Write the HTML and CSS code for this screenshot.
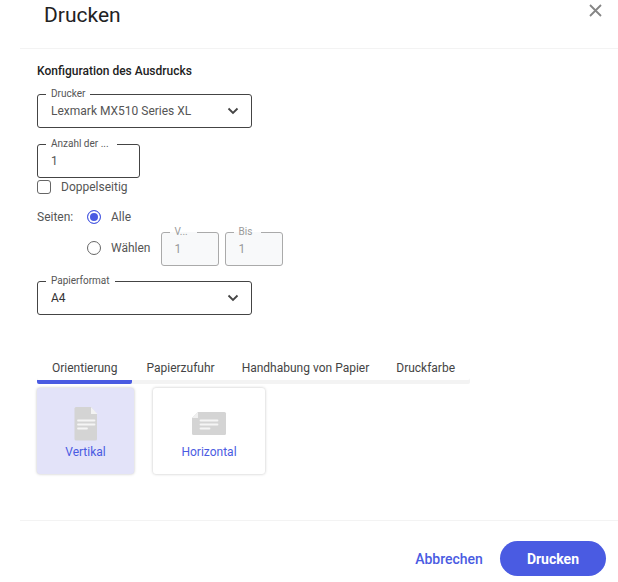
FILE: index.html
```html
<!DOCTYPE html>
<html lang="de">
<head>
  <meta charset="UTF-8" />
  <meta name="viewport" content="width=device-width, initial-scale=1.0" />
  <title>Drucken</title>
  <link rel="stylesheet" href="styles.css">
</head>
<body>
  <div class="dialog" role="dialog" aria-labelledby="dialogTitle">
    <header class="dialog-header">
      <h1 id="dialogTitle">Drucken</h1>
      <button type="button" class="close" aria-label="Schließen">
        <svg width="13" height="13" viewBox="0 0 13 13" fill="none" stroke="#858585" stroke-width="1.8"><path d="M1 1l11 11M12 1L1 12" /></svg>
      </button>
    </header>

    <form class="dialog-body" id="printForm">
      <h2>Konfiguration des Ausdrucks</h2>

      <fieldset class="field field-wide">
        <legend><label for="printer">Drucker</label></legend>
        <div class="select">
          <select id="printer" name="printer">
            <option>Lexmark MX510 Series XL</option>
          </select>
          <svg class="chevron" width="12" height="8" viewBox="0 0 12 8"><path d="M1.500 1.500L6 6l4.500-4.500" /></svg>
        </div>
      </fieldset>

      <fieldset class="field field-copies">
        <legend><label for="copies">Anzahl der ...</label></legend>
        <input type="text" id="copies" name="copies" value="1" />
      </fieldset>

      <label class="option">
        <input type="checkbox" name="duplex" />
        Doppelseitig
      </label>

      <div class="pages">
        <span class="pages-title">Seiten:</span>
        <label class="option">
          <input type="radio" name="pages" value="all" checked />
          Alle
        </label>
        <div class="range">
          <label class="option">
            <input type="radio" name="pages" value="range" />
            Wählen
          </label>
          <fieldset class="field field-page" disabled>
            <legend><label for="pageFrom">V...</label></legend>
            <input type="text" id="pageFrom" name="from" value="1" />
          </fieldset>
          <fieldset class="field field-page" disabled>
            <legend><label for="pageTo">Bis</label></legend>
            <input type="text" id="pageTo" name="to" value="1" />
          </fieldset>
        </div>
      </div>

      <fieldset class="field field-wide">
        <legend><label for="format">Papierformat</label></legend>
        <div class="select">
          <select id="format" name="format" class="dark">
            <option>A4</option>
          </select>
          <svg class="chevron" width="12" height="8" viewBox="0 0 12 8"><path d="M1.500 1.500L6 6l4.500-4.500" /></svg>
        </div>
      </fieldset>

      <div class="tabs" role="tablist">
        <button type="button" class="tab active" role="tab" aria-selected="true">Orientierung</button>
        <button type="button" class="tab" role="tab">Papierzufuhr</button>
        <button type="button" class="tab" role="tab">Handhabung von Papier</button>
        <button type="button" class="tab" role="tab">Druckfarbe</button>
      </div>

      <div class="cards">
        <button type="button" class="card selected" aria-pressed="true">
          <svg width="36" height="36" viewBox="0 0 36 36">
            <path fill="#d4d4d4" d="M8 1h15l6 7v25a1.500 1.500 0 0 1-1.500 1.500h-19.500a1.500 1.500 0 0 1-1.500-1.500v-30.500a1.500 1.500 0 0 1 1.500-1.500z" />
            <path fill="#f3f3f3" d="M23 1l6.500 7H23z" />
            <path stroke="#f5f5f5" stroke-width="1.800" stroke-linecap="round" d="M10 14.500h16.500M10 18.500h16.500M10 22.500h9" />
          </svg>
          Vertikal
        </button>
        <button type="button" class="card card-wide" aria-pressed="false">
          <svg width="36" height="36" viewBox="0 0 36 36">
            <path fill="#d4d4d4" d="M7 6h26.500a1.500 1.500 0 0 1 1.500 1.500v20a1.500 1.500 0 0 1-1.500 1.500h-31a1.500 1.500 0 0 1-1.500-1.500V12z" />
            <path fill="#f0f0f0" d="M7 6v6H1z" />
            <path stroke="#f5f5f5" stroke-width="1.800" stroke-linecap="round" d="M9.500 14.500h17M9.500 18.500h17M9.500 22.500h9" />
          </svg>
          Horizontal
        </button>
      </div>
    </form>

    <footer class="dialog-footer">
      <button type="button" class="btn btn-text">Abbrechen</button>
      <button type="submit" form="printForm" class="btn btn-primary">Drucken</button>
    </footer>
  </div>
</body>
</html>
```

FILE: styles.css
```css
* {
  box-sizing: border-box;
  margin: 0;
  padding: 0;
}

body {
  font-family: Roboto, "Liberation Sans", sans-serif;
  font-size: 12px;
  line-height: 20px;
  color: #555;
  background: #fff;
}

button, input, select {
  font: inherit;
  color: inherit;
  background: none;
  border: none;
}

button {
  cursor: pointer;
}

.dialog {
  display: flex;
  flex-direction: column;
  min-height: 100vh;
  padding-left: 20px;
}

.dialog-header {
  display: flex;
  justify-content: space-between;
  align-items: flex-start;
  height: 49px;
  padding: 0 16px 0 24px;
  border-bottom: 1px solid #f3f3f3;
}

h1 {
  font-size: 21px;
  line-height: 30px;
  font-weight: 400;
  color: #222;
}

.close {
  display: flex;
  padding-top: 4px;
}

.dialog-body {
  flex: 1;
  padding: 12px 17px;
}

h2 {
  margin-bottom: 6px;
  font-size: 12px;
  line-height: 20px;
  font-weight: 500;
  color: #222;
}

/* outlined fields, the legend cuts the top border */
.field {
  min-width: 0;
  padding: 0 12px 6px 8px;
  border: 1px solid #444;
  border-radius: 3px;
}

.field legend {
  padding: 0 5px;
  font-size: 10px;
  line-height: 14px;
  white-space: nowrap;
}

.field legend label {
  display: block;
}

.field input {
  display: block;
  width: 100%;
  height: 20px;
  padding-left: 5px;
}

.field-wide {
  width: 215px;
}

.field-copies {
  width: 103px;
  margin-top: 9px;
}

.field-copies legend {
  width: 71px;
}

.field-page {
  width: 58px;
  color: #999;
  border-color: #aaa;
  background: #f8f9fa;
}

.field-page legend {
  width: 27px;
}

.select {
  display: grid;
  align-items: center;
}

.select select {
  grid-area: 1 / 1;
  height: 20px;
  padding-left: 5px;
  appearance: none;
}

.select .dark {
  color: #333;
}

.chevron {
  grid-area: 1 / 1;
  justify-self: end;
  fill: none;
  stroke: #444;
  stroke-width: 1.8;
  pointer-events: none;
}

.option {
  display: flex;
  align-items: center;
  gap: 10px;
  line-height: 18px;
}

.option input {
  flex: none;
  width: 14px;
  height: 14px;
  border: 1px solid #666;
  appearance: none;
}

.option input[type="checkbox"] {
  border-radius: 3px;
}

.option input[type="radio"] {
  border-radius: 50%;
}

.option input:checked {
  border-color: #4a5be2;
  background: #4a5be2;
  box-shadow: inset 0 0 0 2px #fff;
}

.pages {
  display: grid;
  grid-template-columns: 50px 1fr;
  margin: 12px 0 8px;
  line-height: 18px;
}

.range {
  grid-column: 2;
  display: flex;
  align-items: flex-end;
  gap: 6px;
  margin-top: -1px;
  line-height: 20px;
}

.range .option {
  margin: 0 4px 9px 0;
}

.tabs {
  display: flex;
  gap: 1px;
  width: fit-content;
  margin-top: 41px;
  padding-right: 2px;
  border-radius: 2px;
  box-shadow: inset 0 -4px #f3f3f3;
}

.tab {
  padding: 2px 13px;
  border-bottom: 4px solid transparent;
  color: #444;
  white-space: nowrap;
}

.tab.active {
  padding: 2px 15px;
  border-radius: 2px;
  border-color: #4a5be2;
}

.cards {
  display: flex;
  gap: 19px;
  margin-top: 4px;
}

.card {
  display: flex;
  flex-direction: column;
  align-items: center;
  width: 97px;
  padding: 18px 0 12px;
  border-radius: 3px;
  color: #4a5be2;
  box-shadow: 0 0 3px rgba(0, 0, 0, 0.25);
}

.card-wide {
  width: 112px;
}

.card.selected {
  background: #e3e3f9;
}

.dialog-footer {
  display: flex;
  justify-content: flex-end;
  align-items: center;
  gap: 17px;
  padding: 20px 12px 6px;
  border-top: 1px solid #f3f3f3;
}

.btn {
  height: 35px;
  font-size: 14px;
  font-weight: 500;
}

.btn-text {
  color: #4a5be2;
}

.btn-primary {
  padding: 0 27px;
  border-radius: 18px;
  font-weight: 700;
  color: #fff;
  background: #4a5be2;
}
```
